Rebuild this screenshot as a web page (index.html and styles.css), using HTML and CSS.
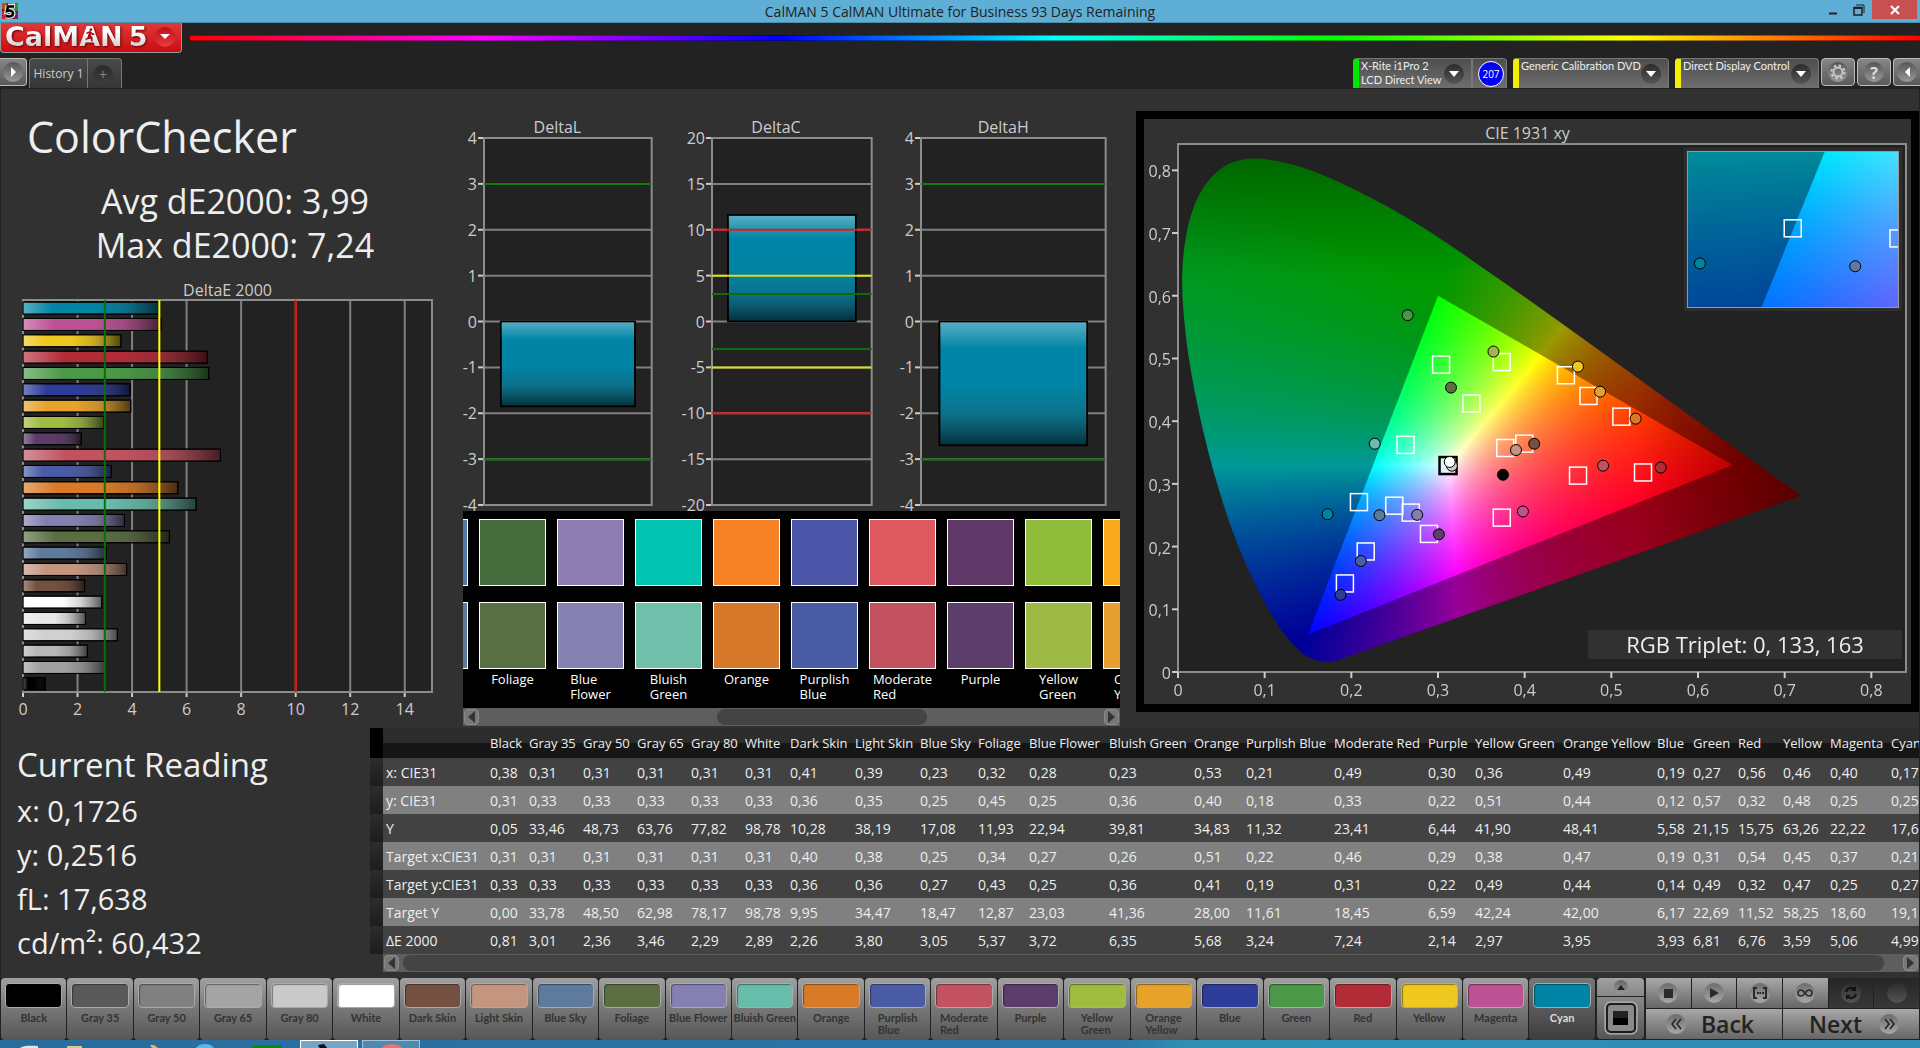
FILE: index.html
```html
<!DOCTYPE html>
<html lang="en">
<head>
<meta charset="utf-8">
<title>CalMAN 5 CalMAN Ultimate for Business</title>
<link rel="stylesheet" href="styles.css">
</head>
<body>
<div class="titlebar">
  <svg class="app-icon" viewBox="0 0 16 16" aria-hidden="true">
    <rect width="16" height="16" fill="#7a1420"/><rect x="10" width="6" height="8" fill="#3a8a3a"/><rect y="8" width="6" height="8" fill="#d02038"/><rect x="10" y="9" width="6" height="7" fill="#7a2060"/><rect width="5" height="6" fill="#c05018"/>
    <path d="M6 3h7M6 3l-1 5c3-1 6 0 6 2.500s-3 3.500-7 2.500" fill="none" stroke="#ddd" stroke-width="5"/>
    <path d="M6 3.500h6M6 3l-1 5c3-1 6 0 6 2.500s-3 3.500-7 2.500" fill="none" stroke="#000" stroke-width="2.500"/>
  </svg>
  <span class="window-title">CalMAN 5 CalMAN Ultimate for Business 93 Days Remaining</span>
  <div class="window-controls">
    <button class="win" aria-label="Minimize"><svg width="12" height="12"><path d="M2 9.500h8" stroke="#222" stroke-width="2"/></svg></button>
    <button class="win" aria-label="Restore"><svg width="12" height="12"><path d="M1 3.500h8v7.500H1z" fill="none" stroke="#222" stroke-width="1.500"/><path d="M1 4.500h8M3 1h8v8" fill="none" stroke="#222"/></svg></button>
    <button class="win close" aria-label="Close"><svg width="10" height="10"><path d="M1 1l8 8M9 1l-8 8" stroke="#fff" stroke-width="2"/></svg></button>
  </div>
</div>

<header class="header">
  <div class="brand-row">
    <button class="logo" aria-label="CalMAN menu">
      <span class="logo-text">CalMAN</span><span class="logo-text">5</span>
      <svg class="runner" viewBox="0 0 12 16" aria-hidden="true"><circle cx="7" cy="2" r="1.600" fill="#a81018"/><path d="M6.500 4.500L5 9l3 2 0 4M5 9l-1 3-3 1M2 6l4-1.500L9 7h2" fill="none" stroke="#a81018" stroke-width="1.800"/></svg>
      <span class="knob red"><svg width="10" height="6"><path d="M0 0h10L5 5z" fill="#fff"/></svg></span>
    </button>
    <div class="spectrum"></div>
  </div>
  <div class="tab-row">
    <button class="square-btn first" aria-label="Expand"><span class="knob"><svg width="7" height="12"><path d="M1 1l5 5-5 5z" fill="#fff"/></svg></span></button>
    <button class="tab active">History 1</button>
    <button class="tab add"><span class="knob dark">+</span></button>
    <div class="devices">
      <button class="device green"><span class="device-name">X-Rite i1Pro 2<br>LCD Direct View</span><span class="knob dark"><svg width="10" height="6"><path d="M0 0h10L5 6z" fill="#fff"/></svg></span></button>
      <button class="reading-count"><span>207</span></button>
      <button class="device generic"><span class="device-name">Generic Calibration DVD</span><span class="knob dark"><svg width="10" height="6"><path d="M0 0h10L5 6z" fill="#fff"/></svg></span></button>
      <button class="device direct"><span class="device-name">Direct Display Control</span><span class="knob dark"><svg width="10" height="6"><path d="M0 0h10L5 6z" fill="#fff"/></svg></span></button>
      <button class="square-btn" aria-label="Settings"><span class="knob"><svg width="16" height="16" viewBox="0 0 16 16"><circle cx="8" cy="8" r="4.500" fill="none" stroke="#ccc" stroke-width="1.800"/><circle cx="8" cy="8" r="6.500" fill="none" stroke="#ccc" stroke-width="2" stroke-dasharray="2.500 2.600"/></svg></span></button>
      <button class="square-btn" aria-label="Help"><span class="knob help">?</span></button>
      <button class="square-btn last" aria-label="Collapse"><span class="knob"><svg width="7" height="12"><path d="M6 1L1 6l5 5z" fill="#fff"/></svg></span></button>
    </div>
  </div>
</header>

<main class="workspace">
  <div class="upper">
    <section class="summary">
      <h1>ColorChecker</h1>
      <p class="stats">Avg dE2000: 3,99<br>Max dE2000: 7,24</p>
      <h2 class="chart-title">DeltaE 2000</h2>
      <svg class="plot" id="delta-e"></svg>
    </section>

    <section class="middle">
      <div class="deltas">
        <figure><figcaption class="chart-title">DeltaL</figcaption><svg class="plot" id="delta-l"></svg></figure>
        <figure><figcaption class="chart-title">DeltaC</figcaption><svg class="plot" id="delta-c"></svg></figure>
        <figure><figcaption class="chart-title">DeltaH</figcaption><svg class="plot" id="delta-h"></svg></figure>
      </div>
      <div class="compare">
        <div class="compare-strip">
          <div class="pair"><i style="background:#5079a4"></i><i style="background:#5e7a9c"></i><span>Blue Sky</span></div>
          <div class="pair"><i style="background:#446c3c"></i><i style="background:#5a6e44"></i><span>Foliage</span></div>
          <div class="pair"><i style="background:#8c7db0"></i><i style="background:#8480b0"></i><span>Blue<br>Flower</span></div>
          <div class="pair"><i style="background:#00c3b0"></i><i style="background:#70bfab"></i><span>Bluish<br>Green</span></div>
          <div class="pair"><i style="background:#f78225"></i><i style="background:#d87829"></i><span>Orange</span></div>
          <div class="pair"><i style="background:#4c57aa"></i><i style="background:#4a5ca4"></i><span>Purplish<br>Blue</span></div>
          <div class="pair"><i style="background:#de5a60"></i><i style="background:#c25260"></i><span>Moderate<br>Red</span></div>
          <div class="pair"><i style="background:#603868"></i><i style="background:#5c3e6a"></i><span>Purple</span></div>
          <div class="pair"><i style="background:#90bc3c"></i><i style="background:#9fba44"></i><span>Yellow<br>Green</span></div>
          <div class="pair"><i style="background:#faa81c"></i><i style="background:#e6a030"></i><span>Orange<br>Yellow</span></div>
        </div>
        <div class="scroller"><button aria-label="Scroll left"><svg width="7" height="12"><path d="M7 0v12L0 6z" fill="#333"/></svg></button><div class="track"><div class="thumb"></div></div><button aria-label="Scroll right"><svg width="7" height="12"><path d="M0 0v12l7-6z" fill="#333"/></svg></button></div>
      </div>
    </section>

    <section class="cie">
      <h2 class="chart-title">CIE 1931 xy</h2>
      <div class="cie-plot">
        <canvas id="cie-canvas"></canvas>
        <svg class="plot" id="cie-marks"></svg>
        <div class="inset"><canvas id="inset-canvas"></canvas><svg id="inset-marks"></svg></div>
        <div class="triplet">RGB Triplet: 0, 133, 163</div>
      </div>
    </section>
  </div>

  <div class="lower">
    <section class="current">
      <h2>Current Reading</h2>
      <p>x: 0,1726</p>
      <p>y: 0,2516</p>
      <p>fL: 17,638</p>
      <p>cd/m²: 60,432</p>
    </section>
    <section class="results">
      <div class="table-clip">
      <table>
        <colgroup><col class="c13"><col class="c104"><col class="c39"><col class="c54"><col class="c54"><col class="c54"><col class="c54"><col class="c45"><col class="c65"><col class="c65"><col class="c58"><col class="c51"><col class="c80"><col class="c85"><col class="c52"><col class="c88"><col class="c94"><col class="c47"><col class="c88"><col class="c94"><col class="c36"><col class="c45"><col class="c45"><col class="c47"><col class="c61"><col class="c65"></colgroup>
        <thead><tr><th></th><th></th><th>Black</th><th>Gray 35</th><th>Gray 50</th><th>Gray 65</th><th>Gray 80</th><th>White</th><th>Dark Skin</th><th>Light Skin</th><th>Blue Sky</th><th>Foliage</th><th>Blue Flower</th><th>Bluish Green</th><th>Orange</th><th>Purplish Blue</th><th>Moderate Red</th><th>Purple</th><th>Yellow Green</th><th>Orange Yellow</th><th>Blue</th><th>Green</th><th>Red</th><th>Yellow</th><th>Magenta</th><th>Cyan</th></tr></thead>
        <tbody>
        <tr><td></td><th>x: CIE31</th><td>0,38</td><td>0,31</td><td>0,31</td><td>0,31</td><td>0,31</td><td>0,31</td><td>0,41</td><td>0,39</td><td>0,23</td><td>0,32</td><td>0,28</td><td>0,23</td><td>0,53</td><td>0,21</td><td>0,49</td><td>0,30</td><td>0,36</td><td>0,49</td><td>0,19</td><td>0,27</td><td>0,56</td><td>0,46</td><td>0,40</td><td>0,17</td></tr>
        <tr><td></td><th>y: CIE31</th><td>0,31</td><td>0,33</td><td>0,33</td><td>0,33</td><td>0,33</td><td>0,33</td><td>0,36</td><td>0,35</td><td>0,25</td><td>0,45</td><td>0,25</td><td>0,36</td><td>0,40</td><td>0,18</td><td>0,33</td><td>0,22</td><td>0,51</td><td>0,44</td><td>0,12</td><td>0,57</td><td>0,32</td><td>0,48</td><td>0,25</td><td>0,25</td></tr>
        <tr><td></td><th>Y</th><td>0,05</td><td>33,46</td><td>48,73</td><td>63,76</td><td>77,82</td><td>98,78</td><td>10,28</td><td>38,19</td><td>17,08</td><td>11,93</td><td>22,94</td><td>39,81</td><td>34,83</td><td>11,32</td><td>23,41</td><td>6,44</td><td>41,90</td><td>48,41</td><td>5,58</td><td>21,15</td><td>15,75</td><td>63,26</td><td>22,22</td><td>17,64</td></tr>
        <tr><td></td><th>Target x:CIE31</th><td>0,31</td><td>0,31</td><td>0,31</td><td>0,31</td><td>0,31</td><td>0,31</td><td>0,40</td><td>0,38</td><td>0,25</td><td>0,34</td><td>0,27</td><td>0,26</td><td>0,51</td><td>0,22</td><td>0,46</td><td>0,29</td><td>0,38</td><td>0,47</td><td>0,19</td><td>0,31</td><td>0,54</td><td>0,45</td><td>0,37</td><td>0,21</td></tr>
        <tr><td></td><th>Target y:CIE31</th><td>0,33</td><td>0,33</td><td>0,33</td><td>0,33</td><td>0,33</td><td>0,33</td><td>0,36</td><td>0,36</td><td>0,27</td><td>0,43</td><td>0,25</td><td>0,36</td><td>0,41</td><td>0,19</td><td>0,31</td><td>0,22</td><td>0,49</td><td>0,44</td><td>0,14</td><td>0,49</td><td>0,32</td><td>0,47</td><td>0,25</td><td>0,27</td></tr>
        <tr><td></td><th>Target Y</th><td>0,00</td><td>33,78</td><td>48,50</td><td>62,98</td><td>78,17</td><td>98,78</td><td>9,95</td><td>34,47</td><td>18,47</td><td>12,87</td><td>23,03</td><td>41,36</td><td>28,00</td><td>11,61</td><td>18,45</td><td>6,59</td><td>42,24</td><td>42,00</td><td>6,17</td><td>22,69</td><td>11,52</td><td>58,25</td><td>18,60</td><td>19,13</td></tr>
        <tr><td></td><th>ΔE 2000</th><td>0,81</td><td>3,01</td><td>2,36</td><td>3,46</td><td>2,29</td><td>2,89</td><td>2,26</td><td>3,80</td><td>3,05</td><td>5,37</td><td>3,72</td><td>6,35</td><td>5,68</td><td>3,24</td><td>7,24</td><td>2,14</td><td>2,97</td><td>3,95</td><td>3,93</td><td>6,81</td><td>6,76</td><td>3,59</td><td>5,06</td><td>4,99</td></tr>
        </tbody>
      </table>
      </div>
      <div class="scroller wide"><button aria-label="Scroll left"><svg width="7" height="12"><path d="M7 0v12L0 6z" fill="#333"/></svg></button><div class="track"><div class="thumb"></div></div><button aria-label="Scroll right"><svg width="7" height="12"><path d="M0 0v12l7-6z" fill="#333"/></svg></button></div>
    </section>
  </div>
</main>

<footer class="footer">
  <div class="patches">
    <button class="patch"><i style="background:#000"></i><span>Black</span></button>
    <button class="patch"><i style="background:#595959"></i><span>Gray 35</span></button>
    <button class="patch"><i style="background:#808080"></i><span>Gray 50</span></button>
    <button class="patch"><i style="background:#a4a4a4"></i><span>Gray 65</span></button>
    <button class="patch"><i style="background:#cacaca"></i><span>Gray 80</span></button>
    <button class="patch"><i style="background:#fff"></i><span>White</span></button>
    <button class="patch"><i style="background:#745040"></i><span>Dark Skin</span></button>
    <button class="patch"><i style="background:#c49680"></i><span>Light Skin</span></button>
    <button class="patch"><i style="background:#5e7a9c"></i><span>Blue Sky</span></button>
    <button class="patch"><i style="background:#5a6e42"></i><span>Foliage</span></button>
    <button class="patch"><i style="background:#8480b2"></i><span>Blue Flower</span></button>
    <button class="patch"><i style="background:#68bcaa"></i><span>Bluish Green</span></button>
    <button class="patch"><i style="background:#d87a26"></i><span>Orange</span></button>
    <button class="patch"><i style="background:#4a5ca6"></i><span>Purplish<br>Blue</span></button>
    <button class="patch"><i style="background:#c25260"></i><span>Moderate<br>Red</span></button>
    <button class="patch"><i style="background:#5c3c6a"></i><span>Purple</span></button>
    <button class="patch"><i style="background:#9fbc40"></i><span>Yellow<br>Green</span></button>
    <button class="patch"><i style="background:#e6a22a"></i><span>Orange<br>Yellow</span></button>
    <button class="patch"><i style="background:#2e3c9a"></i><span>Blue</span></button>
    <button class="patch"><i style="background:#4a9848"></i><span>Green</span></button>
    <button class="patch"><i style="background:#b22c38"></i><span>Red</span></button>
    <button class="patch"><i style="background:#eec81e"></i><span>Yellow</span></button>
    <button class="patch"><i style="background:#bc5294"></i><span>Magenta</span></button>
    <button class="patch selected"><i style="background:#0085a6"></i><span>Cyan</span></button>
  </div>
  <div class="pattern">
    <button class="pattern-up" aria-label="Previous patterns"><span class="knob small"><svg width="8" height="5"><path d="M0 5l4-5 4 5z" fill="#222"/></svg></span></button>
    <button class="pattern-window" aria-label="Pattern window"><svg width="34" height="34" viewBox="0 0 34 34"><rect x="1" y="1" width="32" height="32" rx="5" fill="#888" stroke="#bbb"/><rect x="3" y="3" width="28" height="28" rx="4" fill="#8a8a8a" stroke="#1c1c1c" stroke-width="2"/><rect x="9" y="10" width="15" height="14" fill="#000"/><rect x="9" y="10" width="15" height="7" fill="#222"/></svg></button>
  </div>
  <div class="transport">
    <button aria-label="Stop"><span class="knob grey"><svg width="9" height="9"><path d="M0 0h9v9H0z" fill="#2a2a2a"/></svg></span></button>
    <button aria-label="Play"><span class="knob grey"><svg width="10" height="12"><path d="M1 1l9 5-9 5z" fill="#2a2a2a"/></svg></span></button>
    <button aria-label="Read series"><span class="knob grey"><svg width="14" height="12"><path d="M4 1H1v10h3M10 1h3v10h-3M4 6h2M6.500 6h1.500M9 6h2" fill="none" stroke="#2a2a2a" stroke-width="2"/></svg></span></button>
    <button aria-label="Continuous"><span class="knob grey"><svg width="16" height="8"><path d="M8 4C6 1 5 1 4 1a3 3 0 0 0 0 6c1 0 2 0 4-3s3-3 4-3a3 3 0 0 1 0 6c-1 0-2 0-4-3z" fill="none" stroke="#2a2a2a" stroke-width="1.500"/></svg></span></button>
    <button class="off" aria-label="Refresh"><span class="knob dark"><svg width="14" height="14" viewBox="0 0 14 14"><path d="M2 6a5 5 0 0 1 8-3M12 8a5 5 0 0 1-8 3" fill="none" stroke="#111" stroke-width="2.200"/><path d="M12 0v5H7zM2 14V9h5z" fill="#111"/></svg></span></button>
    <button class="off" aria-label="Empty"><span class="knob dark"></span></button>
    <button class="step"><span class="knob grey"><svg width="11" height="12"><path d="M5 1L1 6l4 5M10 1L6 6l4 5" fill="none" stroke="#222" stroke-width="1.500"/></svg></span>Back</button>
    <button class="step">Next<span class="knob grey"><svg width="11" height="12"><path d="M1 1l4 5-4 5M6 1l4 5-4 5" fill="none" stroke="#222" stroke-width="1.500"/></svg></span></button>
  </div>
</footer>

<div class="taskbar" aria-hidden="true">
  <svg width="290" height="8"><path d="M20 8c5-3 10-2 18-2v2z" fill="#d8e8f4"/><path d="M67 6h15v2H67z" fill="#d8c880"/><path d="M150 5l4 0 4 3h-6z" fill="#e8b060"/><path d="M196 8a10 7 0 0 1 18 0z" fill="#58b8e8"/><path d="M252 5h30v3h-30z" fill="#0a8a0a"/></svg>
  <span class="task on"><svg width="58" height="8"><path d="M17 4l6-1 4 5h-8z" fill="#111"/></svg></span>
  <span class="task"><svg width="58" height="8"><path d="M18 8a12 8 0 0 1 22 0z" fill="#f07070"/></svg></span>
</div>
<script src="charts.js"></script>
</body>
</html>
```

FILE: styles.css
```css
* { box-sizing: border-box; }

body {
  margin: 0;
  min-height: 100vh;
  display: flex;
  flex-direction: column;
  overflow-x: hidden;
  background: #222;
  color: #eee;
  font-family: "Open Sans", "Noto Sans", sans-serif;
  font-size: 14px;
}

button {
  margin: 0;
  padding: 0;
  border: 0;
  background: none;
  color: inherit;
  font: inherit;
}

svg { display: block; }
h1, h2, p, figure { margin: 0; font-weight: 400; }

/* Window frame */
.titlebar {
  display: grid;
  grid-template-columns: 1fr auto 1fr;
  align-items: start;
  height: 23px;
  background: #5faed5;
  border-bottom: 1px solid #4c8cab;
}
.app-icon { width: 16px; height: 16px; margin: 3px 2px; }
.window-title { color: #222; font-size: 14px; line-height: 24px; }
.window-controls { display: flex; justify-self: end; padding-right: 3px; }
.win { display: grid; place-items: center; width: 26px; height: 19px; }
.win.close { width: 45px; background: #c75050; }

/* Header */
.header { background: #222; }
.brand-row { display: flex; align-items: flex-start; gap: 8px; height: 35px; }
.logo {
  position: relative;
  display: flex;
  align-items: center;
  gap: 6px;
  width: 182px;
  height: 30px;
  padding: 0 6px 2px 4px;
  border: 1px solid #999;
  border-width: 0 1px 1px;
  border-radius: 0 0 4px 4px;
  background: linear-gradient(#e03a3c, #c80c10);
}
.logo-text {
  font: bold 27px/26px "DejaVu Sans", sans-serif;
  background: linear-gradient(#fff 30%, #c4c4c4);
  -webkit-background-clip: text;
  background-clip: text;
  color: transparent;
  filter: drop-shadow(1px 1px 1px #600);
}
.runner { position: absolute; left: 83px; top: 5px; width: 12px; height: 14px; }
.spectrum {
  flex: 1;
  height: 6px;
  margin-top: 12px;
  border: 1px solid rgba(0, 0, 0, .4);
  border-width: 1px 0;
  background: linear-gradient(90deg, #f00, #f0f 17%, #00f 34%, #0ff 50%, #0f0 66%, #ff0 83%, #f00);
}

.knob {
  display: grid;
  place-items: center;
  flex: none;
  width: 20px;
  height: 20px;
  border-radius: 50%;
  background: linear-gradient(#555, #999);
  color: #ddd;
}
.knob.red { margin-left: auto; background: linear-gradient(#c01018, #e83c3c); }
.knob.dark { background: linear-gradient(#2c2c2c, #555); }
.knob.grey { background: linear-gradient(#6c6c6c, #a8a8a8); }
.knob.small { width: 14px; height: 14px; background: linear-gradient(#666, #999); }
.knob.help { font-size: 16px; font-weight: 700; }

.tab-row { display: flex; align-items: flex-start; height: 31px; }
.square-btn {
  display: grid;
  place-items: center;
  width: 34px;
  height: 28px;
  border: 1px solid #bbb;
  border-radius: 4px;
  background: linear-gradient(#868686, #5a5a5a);
}
.square-btn.first { width: 27px; border-left: 0; border-radius: 0 4px 4px 0; }
.square-btn.last { width: 27px; border-right: 0; border-radius: 4px 0 0 4px; }
.tab {
  height: 30px;
  border: 1px solid #777;
  border-bottom: 0;
  background: linear-gradient(#4a4a4a, #353535);
  color: #ccc;
  font-size: 12px;
}
.tab.active { width: 59px; margin-left: 2px; border-radius: 4px 0 0 0; }
.tab.add { width: 34px; border-left: 0; border-radius: 0 4px 0 0; }
.tab .knob { margin: 2px auto 0 5px; background: linear-gradient(#2c2c2c, #3c3c3c); color: #888; font-size: 14px; line-height: 18px; }

.devices { display: flex; gap: 2px; margin-left: auto; }
.device, .reading-count {
  height: 30px;
  border: 1px solid #777;
  border-bottom: 0;
  background: linear-gradient(#4e4e4e, #6e6e6e);
}
.device {
  display: flex;
  justify-content: space-between;
  padding: 0 7px 0 2px;
  border-left: 6px solid #f0f000;
  border-radius: 4px 4px 0 0;
  text-align: left;
  font-family: Lato, sans-serif;
  font-size: 11px;
  line-height: 14px;
  white-space: nowrap;
}
.device .knob { margin-top: 5px; }
.device.green { width: 119px; border-left-color: #00e800; border-radius: 4px 0 0 0; }
.device.generic { width: 156px; margin-left: 4px; }
.device.direct { width: 144px; margin-left: 4px; }
.reading-count { width: 35px; margin-left: -2px; border-radius: 0 4px 0 0; }
.reading-count span {
  display: grid;
  place-items: center;
  width: 26px;
  height: 26px;
  margin: 0 2px 0 auto;
  border: 1px solid #fff;
  border-radius: 50%;
  background: #00f;
  color: #fff;
  font-size: 10px;
}

/* Workspace */
.workspace {
  flex: 1;
  display: flex;
  flex-direction: column;
  margin: 0 1px;
  background: #313131;
}
.upper {
  flex: 1;
  display: grid;
  grid-template-columns: 462fr 673fr 783fr;
  min-height: 639px;
}
.summary, .middle, .cie { display: flex; flex-direction: column; min-width: 0; }
.middle { padding-right: 16px; }
.chart-title { text-align: center; font-size: 16px; line-height: 20px; color: #ccc; }
.plot { flex: 1; width: 100%; min-height: 0; overflow: visible; font-size: 16px; fill: #ccc; }

.summary { padding: 18px 31px 36px 22px; }
.summary h1 { padding-left: 4px; font-size: 43px; line-height: 60px; }
.stats { padding: 12px 0 13px 15px; text-align: center; font-size: 34px; line-height: 44px; }

.deltas {
  display: grid;
  grid-template-columns: 189fr 191fr 206fr;
  gap: 29px;
  height: 422px;
  padding: 29px 14px 6px 0;
}
figure { display: flex; flex-direction: column; min-width: 0; }
figure .plot { width: auto; margin-left: 21px; }
figure:nth-child(2) .plot { margin-left: 31px; }
.deltas .chart-title { line-height: 18px; margin-bottom: 2px; }

.compare { background: #000; overflow: hidden; }
.compare-strip {
  display: flex;
  gap: 11px;
  height: 197px;
  margin-left: -62px;
  padding-top: 8px;
}
.pair { flex: none; width: 67px; display: flex; flex-direction: column; align-items: center; }
.pair i { width: 67px; height: 67px; margin-bottom: 16px; border: 1px solid #fff; }
.pair span { margin-top: -13px; font-size: 13px; line-height: 15px; color: #fff; }

.scroller { display: flex; gap: 4px; height: 18px; padding: 1px; background: #5e5e5e; }
.scroller button { display: grid; place-items: center; width: 15px; border: 1px solid #8a8a8a; border-radius: 4px; background: #777; }
.track { flex: 1; }
.thumb { width: 34%; height: 100%; margin-left: 38%; border-radius: 8px; background: #444; }
.wide .thumb { width: 99%; margin-left: 0; }

.cie {
  height: 601px;
  margin-top: 22px;
  padding: 4px 5px 32px 34px;
  border: 8px solid #000;
}
.cie .chart-title { padding-right: 29px; }
.cie-plot { position: relative; flex: 1; display: flex; margin-top: 1px; background: #222; }
#cie-canvas { position: absolute; inset: 0; width: 100%; height: 100%; }
#cie-marks { position: relative; }
.inset {
  position: absolute;
  right: 7px;
  top: 7px;
  width: 212px;
  height: 157px;
  border: 1px solid #999;
  outline: 3px solid #2e2e2e;
  overflow: hidden;
}
.inset canvas, .inset svg { position: absolute; inset: 0; width: 100%; height: 100%; }
.triplet {
  position: absolute;
  right: 4px;
  bottom: 13px;
  width: 314px;
  background: #313131;
  text-align: center;
  font-size: 22px;
  line-height: 29px;
}

.lower { display: flex; height: 250px; }
.current { width: 369px; flex: none; padding: 13px 0 0 16px; }
.current h2 { font-size: 33px; line-height: 48px; }
.current p { font-size: 29px; line-height: 44px; }
.results { flex: 1; min-width: 0; }
.table-clip { overflow: hidden; }
table { table-layout: fixed; width: 1583px; border-collapse: collapse; }
th, td { padding: 0 0 0 3px; text-align: left; font-weight: 400; white-space: nowrap; }
thead tr { height: 30px; background: linear-gradient(#2c2c2c 50%, #161616 50%); font-size: 13px; }
tbody tr { height: 28px; background: #424242; }
tbody tr:nth-child(even) { background: #808080; }
thead th:first-child { background: #000; }
tbody td:first-child { background: linear-gradient(#2c2c2c, #1e1e1e); }
.c13 { width: 13px; } .c36 { width: 36px; } .c39 { width: 39px; } .c45 { width: 45px; }
.c47 { width: 47px; } .c51 { width: 51px; } .c52 { width: 52px; } .c54 { width: 54px; }
.c58 { width: 58px; } .c61 { width: 61px; } .c65 { width: 65px; } .c80 { width: 80px; }
.c85 { width: 85px; } .c88 { width: 88px; } .c94 { width: 94px; } .c104 { width: 104px; }
.wide { margin-left: 13px; }

/* Pattern bar */
.footer { display: flex; gap: 2px; height: 62px; padding: 0 1px; background: #222; }
.patches { flex: 1596; display: flex; gap: 1px; min-width: 0; }
.patch {
  flex: 1;
  display: flex;
  flex-direction: column;
  align-items: center;
  min-width: 0;
  padding: 5px 4px 0;
  border-radius: 4px;
  background: linear-gradient(#a0a0a0, #777 50%, #565656);
  color: #333;
  font: bold 11px/12px Lato, sans-serif;
  text-align: left;
  white-space: nowrap;
}
.patch i { width: 100%; height: 25px; margin-bottom: 4px; border: 1px solid #aaa; border-radius: 4px; box-shadow: inset 1px 1px 1px rgba(0, 0, 0, .4); }
.patch.selected { background: linear-gradient(#777, #3c3c3c); color: #ddd; }
.pattern { width: 47px; display: flex; flex-direction: column; gap: 1px; }
.pattern button { display: grid; place-items: center; width: 100%; background: linear-gradient(#a0a0a0, #888); }
.pattern-up { height: 18px; border-radius: 4px 4px 0 0; }
.pattern .pattern-window { height: 42px; border-radius: 0 0 4px 4px; background: linear-gradient(#888, #555); }
.transport {
  display: grid;
  grid-template-columns: repeat(6, 1fr);
  grid-template-rows: 30px 30px;
  gap: 1px;
  width: 273px;
}
.transport button { display: flex; align-items: center; justify-content: center; background: linear-gradient(#a8a8a8, #666); }
.transport .off { background: linear-gradient(#262626, #383838); }
.transport .step { grid-column: span 3; justify-content: space-between; padding: 0 28px 0 20px; color: #222; font-size: 23px; font-weight: 600; line-height: 28px; }
.transport .step:last-child { padding: 0 20px 0 26px; }

.taskbar { display: flex; gap: 4px; height: 8px; overflow: hidden; background: linear-gradient(90deg, #2a6c9c, #2c76a8 58%, #3090b4 62%, #2f8cb4); }
.taskbar > svg { margin-right: 6px; }
.task { width: 58px; height: 8px; border: 1px solid #a0c4dc; border-bottom: 0; background: #5088b0; }
.task.on { background: #78a4c4; border-color: #fff; }
```

FILE: charts.js
```js
const NS = 'http://www.w3.org/2000/svg';

function add(parent, name, attrs, text) {
  const node = document.createElementNS(NS, name);
  for (const key in attrs) node.setAttribute(key, attrs[key]);
  if (text !== undefined) node.textContent = text;
  parent.appendChild(node);
  return node;
}
const pct = v => v * 100 + '%';
const hLine = (svg, t, color, w) => add(svg, 'line', { x1: 0, x2: '100%', y1: pct(t), y2: pct(t), stroke: color, 'stroke-width': w });
const vLine = (svg, t, color, w) => add(svg, 'line', { y1: 0, y2: '100%', x1: pct(t), x2: pct(t), stroke: color, 'stroke-width': w });

function shine(svg, id, vertical) {
  const g = add(add(svg, 'defs', {}), 'linearGradient', { id, x2: vertical ? 0 : 1, y2: vertical ? 1 : 0 });
  [[0, '#fff', .35], [.22, '#fff', 0], [.5, '#333', 0], [.72, '#333', .2], [1, '#000', .65]]
    .forEach(s => add(g, 'stop', { offset: s[0], 'stop-color': s[1], 'stop-opacity': s[2] }));
}
const frame = svg => add(svg, 'rect', { width: '100%', height: '100%', fill: 'none', stroke: '#8c8c8c', 'stroke-width': 2 });

// Horizontal DeltaE 2000 bars, one per patch
{
  const svg = document.getElementById('delta-e');
  const bars = [[4.99, '#0085a6'], [5.06, '#bc5294'], [3.59, '#eec81e'], [6.76, '#b22c38'], [6.81, '#4a9848'], [3.93, '#2e3c9a'],
    [3.95, '#e6a22a'], [2.97, '#9fbc40'], [2.14, '#5c3c6a'], [7.24, '#c25260'], [3.24, '#4a5ca6'], [5.68, '#d87a26'],
    [6.35, '#68bcaa'], [3.72, '#8480b2'], [5.37, '#5a6e42'], [3.05, '#5e7a9c'], [3.8, '#c49680'], [2.26, '#745040'],
    [2.89, '#ffffff'], [2.29, '#e8e8e8'], [3.46, '#d0d0d0'], [2.36, '#b8b8b8'], [3.01, '#a0a0a0'], [.81, '#000000']];
  shine(svg, 'shine-h', false);
  add(svg, 'rect', { width: '100%', height: '100%', fill: '#222' });
  for (let v = 0; v < 15; v += 2) {
    vLine(svg, v / 15, '#808080', 2);
    const tick = add(svg, 'svg', { x: pct(v / 15), y: '100%', overflow: 'visible' });
    add(tick, 'path', { d: 'M0 0v5', stroke: '#ccc', 'stroke-width': 2 });
    add(tick, 'text', { y: 23, 'text-anchor': 'middle' }, v);
  }
  frame(svg);
  bars.forEach(([v, color], i) => {
    for (const fill of [color, 'url(#shine-h)'])
      add(svg, 'rect', { x: 0, y: pct((i + .13) / 24), width: pct(v / 15), height: 12, fill, stroke: '#000' });
  });
  vLine(svg, 3 / 15, '#0a6e0a', 2);
  vLine(svg, 5 / 15, '#ff0', 2);
  vLine(svg, 10 / 15, '#f00', 2);
}

// Vertical single-value charts
function deltaChart(id, max, step, value, limits) {
  const svg = document.getElementById(id);
  const at = v => (max - v) / (2 * max);
  shine(svg, id + '-shine', true);
  add(svg, 'rect', { width: '100%', height: '100%', fill: '#222' });
  for (let v = max; v >= -max; v -= step) {
    hLine(svg, at(v), '#808080', 2);
    const tick = add(svg, 'svg', { y: pct(at(v)), overflow: 'visible' });
    add(tick, 'path', { d: 'M-6 0H0', stroke: '#ccc', 'stroke-width': 2 });
    add(tick, 'text', { x: -7, y: 6, 'text-anchor': 'end' }, v);
  }
  frame(svg);
  for (const fill of ['#0085a6', `url(#${id}-shine)`])
    add(svg, 'rect', { x: '10%', width: '80%', y: pct(at(Math.max(value, 0))), height: pct(Math.abs(value) / (2 * max)), fill, stroke: '#000', 'stroke-width': 1.5 });
  limits.forEach(([v, color]) => { hLine(svg, at(v), color, 2); hLine(svg, at(-v), color, 2); });
}
deltaChart('delta-l', 4, 1, -1.85, [[3, '#14780f']]);
deltaChart('delta-c', 20, 5, 11.6, [[10, '#dc1e1e'], [5, '#dede14'], [3, '#0a6e0a']]);
deltaChart('delta-h', 4, 1, -2.7, [[3, '#14780f']]);

// CIE chromaticity diagram
const FULL = { x0: 0, x1: .84, y0: 0, y1: .842 };
const NEAR = { x0: .168, x1: .249, y0: .227, y1: .3145 };
const LOCUS = [[.719, .281], [.6915, .3083], [.6658, .334], [.627, .3725], [.5752, .4242], [.5125, .4866], [.4441, .5547], [.3731, .6245],
  [.3016, .6923], [.2658, .7235], [.2296, .7515], [.1929, .777], [.155, .800], [.116, .816], [.078, .821], [.045, .803], [.0175, .75],
  [.003, .6548], [.0075, .5384], [.0235, .4127], [.0454, .295], [.0687, .2007], [.0913, .1327], [.1096, .0868], [.1241, .0578],
  [.1355, .0399], [.144, .029], [.155, .0195], [.17, .0155], [.182, .0175]];
const GAMUT = [[.64, .33], [.3, .6], [.15, .06]];

function shade(x, y) {
  const X = x / y, Z = (1 - x - y) / y;
  const rgb = [3.2406 * X - 1.5372 - .4986 * Z, -.9689 * X + 1.8758 + .0415 * Z, .0557 * X - .204 + 1.057 * Z].map(c => Math.max(c, 0));
  const top = Math.max(...rgb);
  let f = 255;
  f *= 1 - Math.max(0, x - .53) * 2.35;
  f *= 1 - Math.max(0, y - .63) * 1.75;
  return rgb.map(c => c / top * f);
}

function paint(canvas, view) {
  const w = canvas.width = canvas.clientWidth, h = canvas.height = canvas.clientHeight;
  const ctx = canvas.getContext('2d');
  const px = p => [(p[0] - view.x0) / (view.x1 - view.x0) * w, (view.y1 - p[1]) / (view.y1 - view.y0) * h];
  for (const level of [.6, 1]) {
    const layer = document.createElement('canvas');
    layer.width = w; layer.height = h;
    const lctx = layer.getContext('2d'), img = lctx.createImageData(w, h);
    for (let j = 0; j < h; j++) for (let i = 0; i < w; i++) {
      const y = Math.max(view.y1 - (j + .5) / h * (view.y1 - view.y0), .001);
      const c = shade(view.x0 + (i + .5) / w * (view.x1 - view.x0), y), k = (j * w + i) * 4;
      img.data[k] = c[0] * level; img.data[k + 1] = c[1] * level; img.data[k + 2] = c[2] * level; img.data[k + 3] = 255;
    }
    lctx.putImageData(img, 0, 0);
    ctx.save();
    ctx.beginPath();
    (level === 1 ? GAMUT : LOCUS).forEach((p, i, all) => {
      const a = px(p), b = px(all[(i + 1) % all.length]);
      if (level === 1 || i === 0 || i === all.length - 1) ctx.lineTo(...a);
      else ctx.quadraticCurveTo(...a, (a[0] + b[0]) / 2, (a[1] + b[1]) / 2);
    });
    ctx.closePath();
    ctx.clip();
    ctx.drawImage(layer, 0, 0);
    ctx.restore();
  }
}

const TARGETS = [[.303, .491], [.373, .495], [.447, .474], [.473, .441], [.511, .408], [.338, .429], [.262, .363], [.377, .358], [.399, .365],
  [.461, .314], [.536, .319], [.373, .247], [.2082, .2717], [.249, .266], [.268, .255], [.289, .221], [.216, .193], [.192, .142]];
const READINGS = [[.265, .569, '#4a9648'], [.364, .511, '#9fba42'], [.4615, .487, '#ecc820'], [.487, .447, '#e6a02e'], [.528, .404, '#d87828'],
  [.315, .4535, '#5a6e42'], [.227, .364, '#68bcaa'], [.39, .354, '#c49680'], [.411, .364, '#745040'], [.4905, .329, '#c25260'],
  [.557, .326, '#b02e38'], [.398, .256, '#bc5290'], [.1726, .2516, '#0085a0'], [.2325, .25, '#5e7a9c'], [.276, .2506, '#8480b2'],
  [.301, .2196, '#5c3e6a'], [.211, .177, '#4a5ca4'], [.1875, .123, '#303c96'], [.375, .3145, '#000'], [.316, .329, '#ccc'], [.3135, .335, '#fff']];

function mark(svg, view) {
  const X = x => pct((x - view.x0) / (view.x1 - view.x0)), Y = y => pct((view.y1 - y) / (view.y1 - view.y0));
  const box = { width: 17, height: 17, transform: 'translate(-8 -8)', fill: 'none', 'stroke-width': 1.5 };
  TARGETS.forEach(p => add(svg, 'rect', { ...box, x: X(p[0]), y: Y(p[1]), stroke: '#fff' }));
  add(svg, 'rect', { ...box, x: X(.311), y: Y(.33), stroke: '#000', 'stroke-width': 2.5 });
  READINGS.forEach(p => add(svg, 'circle', { cx: X(p[0]), cy: Y(p[1]), r: 5.5, fill: p[2], stroke: '#000' }));
}
{
  const svg = document.getElementById('cie-marks');
  frame(svg);
  for (let n = 0; n <= 8; n++) {
    const label = n ? '0,' + n : '0';
    const xt = add(svg, 'svg', { x: pct(n / 8.4), y: '100%', overflow: 'visible' });
    add(xt, 'path', { d: 'M0 0v6', stroke: '#ccc', 'stroke-width': 2 });
    add(xt, 'text', { y: 24, 'text-anchor': 'middle' }, label);
    const yt = add(svg, 'svg', { y: pct(1 - n / 8.42), overflow: 'visible' });
    add(yt, 'path', { d: 'M-6 0H0', stroke: '#ccc', 'stroke-width': 2 });
    add(yt, 'text', { x: -7, y: 7, 'text-anchor': 'end' }, label);
  }
  mark(svg, FULL);
  mark(document.getElementById('inset-marks'), NEAR);
}
function paintAll() {
  paint(document.getElementById('cie-canvas'), FULL);
  paint(document.getElementById('inset-canvas'), NEAR);
}
paintAll();
window.addEventListener('resize', paintAll);
```
